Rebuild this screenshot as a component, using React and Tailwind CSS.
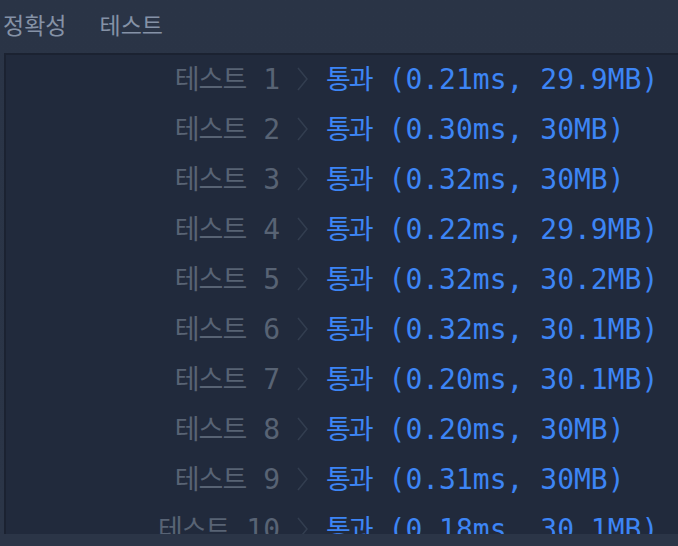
const results = [
  { id: 1, time: "0.21ms", mem: "29.9MB" },
  { id: 2, time: "0.30ms", mem: "30MB" },
  { id: 3, time: "0.32ms", mem: "30MB" },
  { id: 4, time: "0.22ms", mem: "29.9MB" },
  { id: 5, time: "0.32ms", mem: "30.2MB" },
  { id: 6, time: "0.32ms", mem: "30.1MB" },
  { id: 7, time: "0.20ms", mem: "30.1MB" },
  { id: 8, time: "0.20ms", mem: "30MB" },
  { id: 9, time: "0.31ms", mem: "30MB" },
  { id: 10, time: "0.18ms", mem: "30.1MB" },
];

const mono = "[font-family:'DejaVu_Sans_Mono',monospace]";
const kr = "[font-family:'Noto_Sans_CJK_KR',sans-serif]";

function Chevron() {
  return (
    <svg width="12" height="24" viewBox="0 0 12 24" fill="none">
      <polyline points="1,1 10,12 1,23" stroke="#333e50" strokeWidth="1.5" />
    </svg>
  );
}

function Row({ r }) {
  return (
    <div className="flex h-[50px] items-center whitespace-pre">
      <div className="w-[274px] shrink-0 text-right text-[#586374]">
        <span className={`${kr} text-[27px] tracking-[-1px]`}>테스트</span>
        <span className={`${mono} text-[28px]`}> {r.id}</span>
      </div>
      <div className="flex w-[46px] shrink-0 justify-center">
        <Chevron />
      </div>
      <div className="text-[#3d85f5]">
        <span className={`${kr} text-[27px] tracking-[-2px]`}>통과</span>
        <span className={`${mono} text-[28px]`}>
          {" "}({r.time}, {r.mem})
        </span>
      </div>
    </div>
  );
}

export default function App() {
  return (
    <div className="flex h-[546px] w-[678px] flex-col overflow-hidden bg-gradient-to-b from-[#2a3446] to-[#2b3547]">
      <div className={`${kr} flex h-[53px] shrink-0 items-center gap-[33px] pl-[3px] pb-[4px] text-[23px] text-[#8592a6]`}>
        <span>정확성</span>
        <span>테스트</span>
      </div>
      <div className="ml-[4px] h-[481px] shrink-0 overflow-hidden border-l-2 border-t-2 border-[#1b2231] bg-[#212a3c]">
        <div className="-mt-[1px] leading-none">
          {results.map((r) => (
            <Row key={r.id} r={r} />
          ))}
        </div>
      </div>
    </div>
  );
}
